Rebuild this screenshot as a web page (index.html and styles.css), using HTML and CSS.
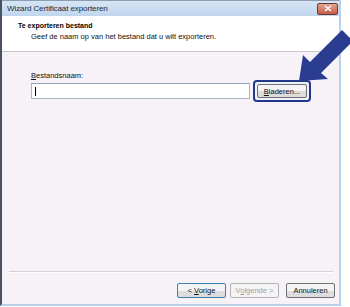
FILE: index.html
```html
<!DOCTYPE html>
<html>
<head>
<meta charset="utf-8">
<link rel="stylesheet" href="styles.css">
</head>
<body>
<div class="window">
  <div class="titlebar">
    <span class="title">Wizard Certificaat exporteren</span>
    <span class="close"><svg width="10" height="7" viewBox="0 0 10 7"><path d="M2 1 L8 6 M8 1 L2 6" stroke="#fff" stroke-width="1.6"/></svg></span>
  </div>
  <div class="client">
    <div class="header">
      <div class="h-title">Te exporteren bestand</div>
      <div class="h-sub">Geef de naam op van het bestand dat u wilt exporteren.</div>
    </div>
    <div class="content">
      <div class="label"><u>B</u>estandsnaam:</div>
      <div class="row">
        <div class="input"><span class="caret"></span></div>
        <div class="hl"><span class="btn browse"><span><u>B</u>laderen...</span></span></div>
      </div>
    </div>
    <div class="footer">
      <div class="sep"></div>
      <div class="buttons">
        <span class="btn def"><span>&lt; <u>V</u>orige</span></span>
        <span class="btn dis"><span>V<u>o</u>lgende &gt;</span></span>
        <span class="btn cancel"><span>Annuleren</span></span>
      </div>
    </div>
  </div>
</div>
<svg class="arrow" width="60" height="60" viewBox="0 0 60 60">
  <polygon points="2,53 6,27 13,34 45,2 56,13 24,45 31,51" fill="#2b3d91"/>
</svg>
</body>
</html>
```
FILE: styles.css
```css
html, body { margin: 0; padding: 0; background: #ffffff; }
body { font-family: "Liberation Sans", Arial, sans-serif; font-size: 8px; color: #000; position: relative; width: 350px; height: 307px; overflow: hidden; }
.window { width: 337px; height: 304px; border-left: 2px solid #4a5262; border-right: 2px solid #b9d0ea; border-bottom: 2px solid #b9d0ea; display: flex; flex-direction: column; background: #f6f2f8; }
.titlebar { height: 16px; background: linear-gradient(#d6e5f4, #c0d6ee); border-top: 1px solid #8c9db3; box-sizing: border-box; display: flex; align-items: center; justify-content: space-between; padding-left: 5px; }
.title { font-size: 8px; color: #1e2a3a; letter-spacing: -0.1px; }
.close { width: 19px; height: 10px; margin-right: 1px; background: linear-gradient(#e2a590, #c35a45); border: 1px solid #6b3a34; border-radius: 2px; display: flex; align-items: center; justify-content: center; }
.client { flex: 1; display: flex; flex-direction: column; }
.header { background: #fff; height: 36px; border-bottom: 1px solid #c8c8c8; padding-left: 16px; padding-top: 6px; box-sizing: border-box; }
.h-title { font-weight: bold; font-size: 7px; color: #000; }
.h-sub { font-size: 7.5px; margin-top: 3px; padding-left: 13px; color: #111; }
.content { flex: 1; padding: 19px 0 0 29px; }
.label { font-size: 7.5px; line-height: 9px; color: #111; }
.row { display: flex; align-items: center; }
.input { width: 219px; height: 16px; box-sizing: border-box; border: 1px solid #abb4c0; border-top-color: #8fa6be; background: #fff; display: flex; align-items: center; padding-left: 3px; }
.caret { width: 1px; height: 9px; background: #000; }
.hl { margin-left: 3px; border: 2px solid #25378a; border-radius: 4px; padding: 2px; background: #eef3fa; }
.btn { display: inline-flex; align-items: center; justify-content: center; height: 14px; box-sizing: border-box; border: 1px solid #707070; border-radius: 2px; background: linear-gradient(#f4f4f4 50%, #dcdcdc 50%); font-size: 7.5px; color: #111; white-space: pre; }
.browse { width: 50px; }
.footer { height: 33px; display: flex; flex-direction: column; }
.sep { margin: 0 6px 0 7px; height: 0; border-top: 1px solid #d6d2d8; border-bottom: 1px solid #fff; }
.buttons { display: flex; justify-content: flex-end; padding: 10px 4px 0 0; gap: 4px; }
.buttons .btn { width: 49px; height: 15px; }
.def { border-color: #3c7fb1; }
.dis { border-color: #b5b2b5; background: #f4f4f4; color: #a0a0a0; }
.cancel { margin-left: 3px; }
.arrow { position: absolute; left: 297px; top: 28px; }
```
